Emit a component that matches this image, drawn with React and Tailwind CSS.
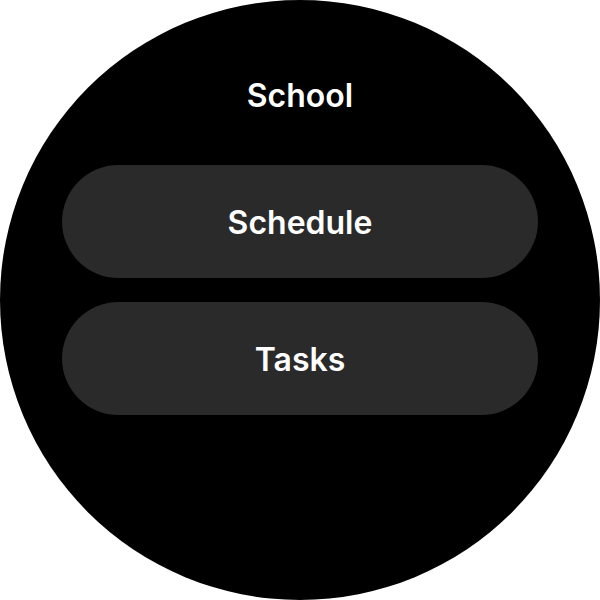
export default function App() {
  return (
    <div className="w-[600px] h-[600px] bg-white" style={{ fontFamily: 'Inter, "Noto Sans", sans-serif' }}>
      <div className="w-[600px] h-[600px] rounded-full bg-black flex flex-col items-center pt-[76px]">
        <div className="h-[40px] leading-[40px] text-white text-[32px] font-semibold">School</div>
        <div className="mt-[49px] flex flex-col gap-[24px]">
          <button className="w-[476px] h-[113px] rounded-full bg-[#2a2a2a] text-white text-[32px] font-semibold flex items-center justify-center pt-[2px]">
            Schedule
          </button>
          <button className="w-[476px] h-[113px] rounded-full bg-[#2a2a2a] text-white text-[32px] font-semibold flex items-center justify-center pt-[2px]">
            Tasks
          </button>
        </div>
      </div>
    </div>
  );
}
